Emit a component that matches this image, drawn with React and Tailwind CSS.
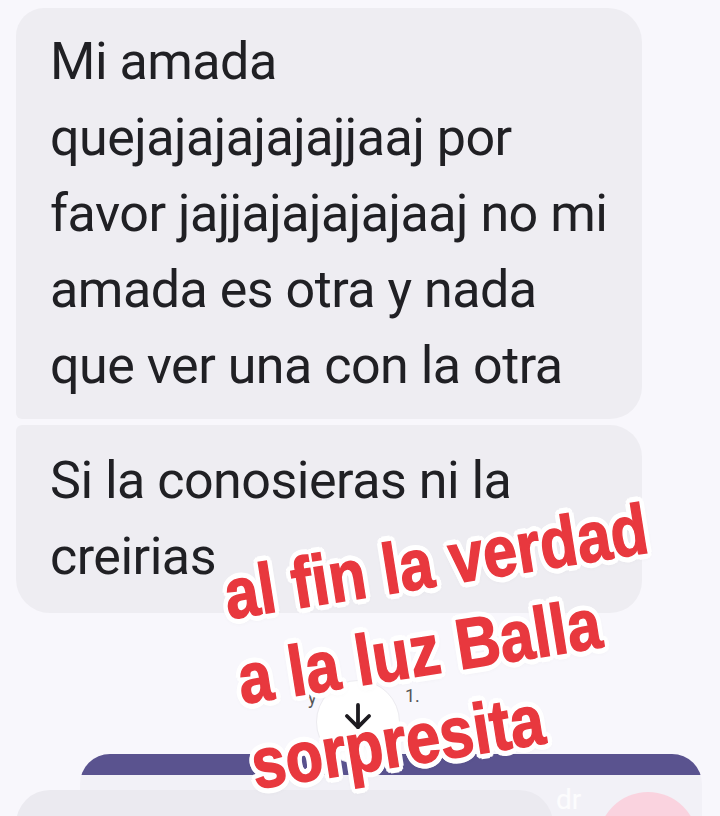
import React from "react";
import { ArrowDown } from "lucide-react";

export default function App() {
  return (
    <div className="relative w-[720px] h-[816px] overflow-hidden bg-[#f8f7fc] flex flex-col font-['Roboto',sans-serif]">
      <div className="pt-2 pl-4 w-[642px] flex flex-col gap-[6px]">
        <div className="bg-[#eeedf2] rounded-tl-[28px] rounded-tr-[34px] rounded-br-[32px] rounded-bl-[6px] pl-[34px] pt-4 pb-[15px] text-[52px] leading-[76px] text-[#202024] tracking-[-0.5px] whitespace-nowrap">
          Mi amada
          <br />
          quejajajajajajjaaj por
          <br />
          favor jajjajajajajaaj no mi
          <br />
          amada es otra y nada
          <br />
          que ver una con la otra
        </div>
        <div className="bg-[#eeedf2] rounded-tl-[6px] rounded-tr-[32px] rounded-br-[32px] rounded-bl-[34px] pl-[34px] pt-[18px] pb-[18px] text-[52px] leading-[76px] text-[#202024] tracking-[-0.5px] whitespace-nowrap">
          Si la conosieras ni la
          <br />
          creirias
        </div>
      </div>

      <div className="flex-1" />

      <div className="ml-[80px] w-[622px] h-[62px] rounded-t-[30px] overflow-hidden flex flex-col">
        <div className="h-[21px] bg-[#5a538f]" />
        <div className="flex-1 bg-[#f2f1f7]" />
      </div>

      {/* overlapping bottom elements */}
      <div className="absolute left-[16px] top-[790px] w-[537px] h-[70px] rounded-[34px] bg-[#ebeaf0]" />
      <div className="absolute left-[598px] top-[792px] w-[100px] h-[100px] rounded-full bg-[#fad3df]" />
      <div className="absolute left-[556px] top-[786px] text-[28px] leading-none text-white/80">dr</div>

      {/* scroll-to-bottom fab */}
      <div className="absolute left-[316px] top-[680px] w-[84px] h-[84px] rounded-full bg-white border border-[#ecebf0] flex items-center justify-center">
        <ArrowDown className="w-[38px] h-[38px] text-[#1d1b20] -mt-[12px]" strokeWidth={2.4} />
      </div>
      <div className="absolute left-[308px] top-[684px] text-[18px] text-[#555]">y</div>
      <div className="absolute left-[405px] top-[682px] text-[18px] text-[#555]">1.</div>

      {/* red caption overlay */}
      <div className="absolute left-[218px] top-[553px] origin-top-left [transform:rotate(-9deg)_scaleX(0.86)] whitespace-nowrap font-['Liberation_Sans',Arial,sans-serif] font-bold text-[71px] leading-[86px] text-[#e8383e] [-webkit-text-stroke:1.5px_#e8383e] [text-shadow:6px_0_0_#fff,-6px_0_0_#fff,0_6px_0_#fff,0_-6px_0_#fff,5px_3px_0_#fff,-5px_3px_0_#fff,5px_-3px_0_#fff,-5px_-3px_0_#fff,4px_4px_0_#fff,-4px_4px_0_#fff,4px_-4px_0_#fff,-4px_-4px_0_#fff,3px_5px_0_#fff,-3px_5px_0_#fff,3px_-5px_0_#fff,-3px_-5px_0_#fff,0_2px_8px_rgba(0,0,0,0.15)]">
        al fin la verdad
        <br />
        a la luz Balla
        <br />
        sorpresita
      </div>
    </div>
  );
}
